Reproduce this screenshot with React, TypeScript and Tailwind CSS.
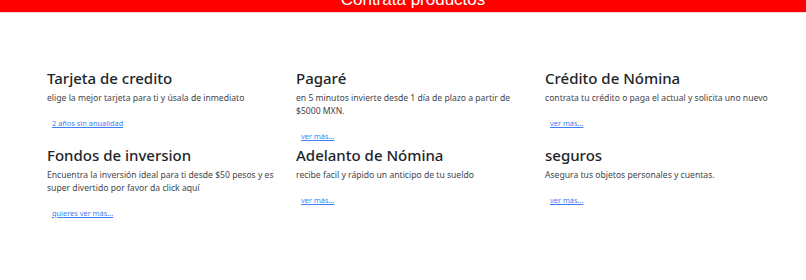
import React from "react";

type Item = { title: string; body: string; link: string };

const items: Item[] = [
  { title: "Tarjeta de credito", body: "elige la mejor tarjeta para ti y úsala de inmediato", link: "2 años sin anualidad" },
  { title: "Pagaré", body: "en 5 minutos invierte desde 1 día de plazo a partir de $5000 MXN.", link: "ver más..." },
  { title: "Crédito de Nómina", body: "contrata tu crédito o paga el actual y solicita uno nuevo", link: "ver más..." },
  { title: "Fondos de inversion", body: "Encuentra la inversión ideal para ti desde $50 pesos y es super divertido por favor da click aquí", link: "quieres ver más..." },
  { title: "Adelanto de Nómina", body: "recibe facil y rápido un anticipo de tu sueldo", link: "ver más..." },
  { title: "seguros", body: "Asegura tus objetos personales y cuentas.", link: "ver más..." },
];

export default function App() {
  return (
    <div className="w-[806px] h-[280px] bg-white overflow-hidden">
      <div className="h-[12px] bg-[#ff0000] overflow-hidden flex justify-center border-b border-[#fcd6d6] box-content">
        <p className="text-white text-[17px] leading-[20px] mt-[-10px] pl-[20px]" style={{ fontFamily: '"Liberation Sans", Arial, sans-serif' }}>
          Contrata productos
        </p>
      </div>
      <div
        className="grid grid-cols-[249px_249px_249px] pl-[47px] pt-[55px]"
        style={{ fontFamily: '"Noto Sans", "Open Sans", sans-serif' }}
      >
        {items.map((it) => (
          <div key={it.title} className="pr-[17px] pb-[3px]">
            <h3 className="text-[15px] leading-[20px] font-medium text-[#212529] mb-[4px]">{it.title}</h3>
            <p className="text-[8.6px] leading-[13px] text-[#3f454b]">{it.body}</p>
            <a href="#" className="block mt-[12px] ml-[5px] text-[7.4px] leading-[12px] text-[#3d7ff5] underline">
              {it.link}
            </a>
          </div>
        ))}
      </div>
    </div>
  );
}
